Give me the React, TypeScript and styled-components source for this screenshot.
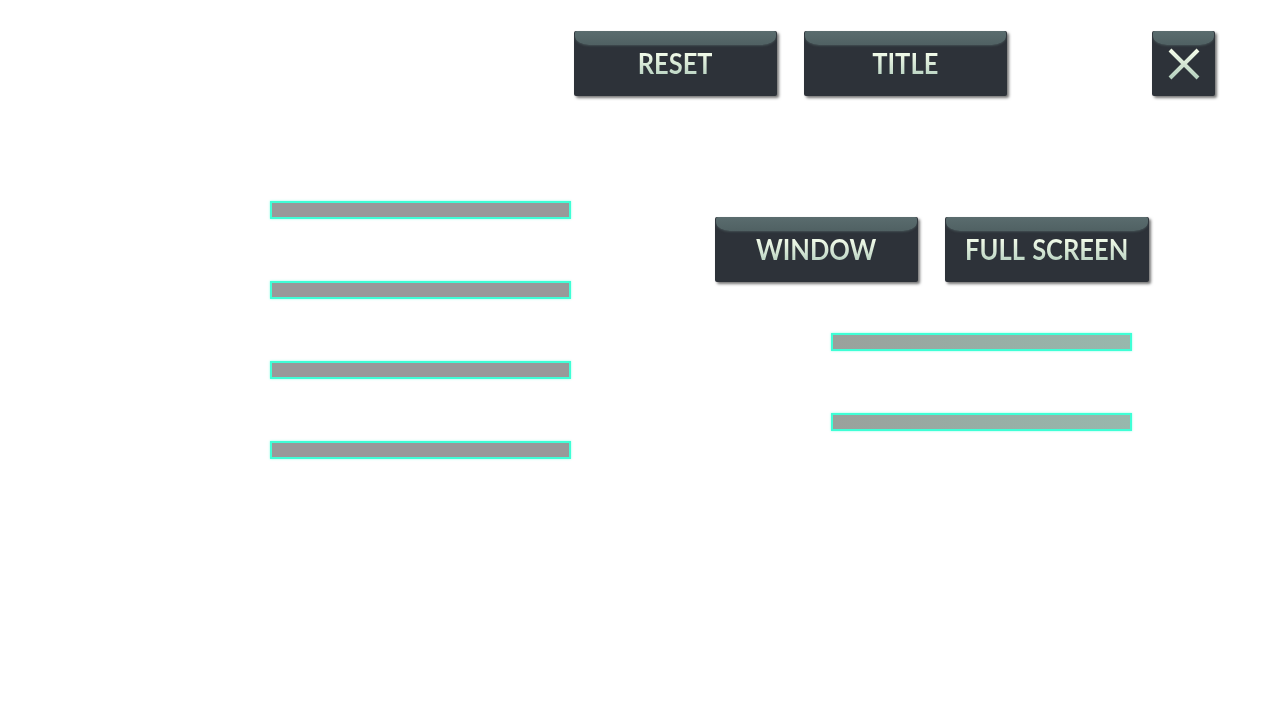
import styled, { createGlobalStyle } from "styled-components";

const GlobalStyle = createGlobalStyle`
  html, body {
    margin: 0;
    padding: 0;
    background: #ffffff;
  }
  body {
    font-family: Lato, "Open Sans", "Liberation Sans", sans-serif;
  }
`;

const Page = styled.div`
  width: 1280px;
  height: 720px;
  background: #ffffff;
  overflow: hidden;
`;

const Header = styled.div`
  display: flex;
  align-items: flex-start;
  gap: 27px;
  padding: 31px 65px 0 574px;
`;

const Spacer = styled.div`
  flex: 1;
`;

const Button = styled.button<{ $width?: number }>`
  position: relative;
  width: ${(p) => p.$width ?? 203}px;
  height: 65px;
  padding: 0;
  border: none;
  border-radius: 2px;
  background: #2d3239;
  box-shadow: 2px 2px 3px rgba(0, 0, 0, 0.55);
  display: flex;
  align-items: center;
  justify-content: center;
  overflow: hidden;
  cursor: pointer;

  &::before {
    content: "";
    position: absolute;
    left: 1px;
    right: 1px;
    top: 0;
    height: 14px;
    border-radius: 2px 2px 14px 14px / 2px 2px 9px 9px;
    background: linear-gradient(#5a6c6e, #506163);
    box-shadow: 0 1px 2px rgba(80, 97, 99, 0.6);
  }
`;

const Label = styled.span`
  position: relative;
  display: inline-block;
  font-family: Lato, "Open Sans", sans-serif;
  font-weight: 700;
  font-size: 28px;
  white-space: nowrap;
  word-spacing: 2px;
  margin-top: -2px;
  transform: scaleX(0.91);
  background: linear-gradient(#f2fbe9 20%, #b9d3c2 90%);
  -webkit-background-clip: text;
  background-clip: text;
  color: transparent;
`;

const CloseIcon = styled.svg`
  position: relative;
  width: 32px;
  height: 32px;
  margin-top: 1px;
`;

const Body = styled.div`
  display: flex;
  align-items: flex-start;
`;

const LeftColumn = styled.div`
  display: flex;
  flex-direction: column;
  gap: 62px;
  padding: 105px 0 0 270px;
`;

const RightColumn = styled.div`
  display: flex;
  flex-direction: column;
  padding: 121px 0 0 144px;
`;

const ButtonRow = styled.div`
  display: flex;
  gap: 27px;
`;

const BarStack = styled.div`
  display: flex;
  flex-direction: column;
  gap: 62px;
  padding: 51px 0 0 116px;
`;

const Bar = styled.div<{ $tint?: boolean }>`
  width: 297px;
  height: 14px;
  border: 2px solid #3fffd6;
  box-shadow: 0 0 2px rgba(63, 255, 214, 0.6);
  background: ${(p) =>
    p.$tint
      ? "linear-gradient(90deg, #9aa19c 0%, #97aea5 50%, #98b8ad 100%)"
      : "#999999"};
`;

export default function App() {
  return (
    <Page>
      <GlobalStyle />
      <Header>
        <Button>
          <Label>RESET</Label>
        </Button>
        <Button>
          <Label>TITLE</Label>
        </Button>
        <Spacer />
        <Button $width={63}>
          <CloseIcon viewBox="0 0 32 32">
            <defs>
              <linearGradient id="xg" x1="0" y1="0" x2="0" y2="1">
                <stop offset="0" stopColor="#f4fce9" />
                <stop offset="1" stopColor="#b6d1bf" />
              </linearGradient>
            </defs>
            <path
              d="M2 2 L30 30 M30 2 L2 30"
              stroke="url(#xg)"
              strokeWidth="4"
              fill="none"
            />
          </CloseIcon>
        </Button>
      </Header>
      <Body>
        <LeftColumn>
          <Bar />
          <Bar />
          <Bar />
          <Bar />
        </LeftColumn>
        <RightColumn>
          <ButtonRow>
            <Button>
              <Label>WINDOW</Label>
            </Button>
            <Button $width={204}>
              <Label>FULL SCREEN</Label>
            </Button>
          </ButtonRow>
          <BarStack>
            <Bar $tint />
            <Bar $tint />
          </BarStack>
        </RightColumn>
      </Body>
    </Page>
  );
}
